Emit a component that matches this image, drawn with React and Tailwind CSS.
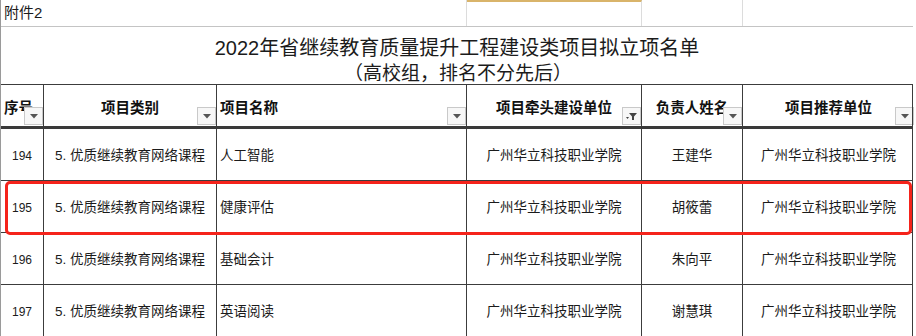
import React from 'react';

const grid = 'grid grid-cols-[43px_173px_250px_175px_101px_171px]';
const font = "font-['Liberation_Sans','Noto_Sans_CJK_SC',sans-serif]";

const rows = [
    { no: '194', type: '5. 优质继续教育网络课程', name: '人工智能', unit: '广州华立科技职业学院', person: '王建华', rec: '广州华立科技职业学院' },
    { no: '195', type: '5. 优质继续教育网络课程', name: '健康评估', unit: '广州华立科技职业学院', person: '胡筱蕾', rec: '广州华立科技职业学院' },
    { no: '196', type: '5. 优质继续教育网络课程', name: '基础会计', unit: '广州华立科技职业学院', person: '朱向平', rec: '广州华立科技职业学院' },
    { no: '197', type: '5. 优质继续教育网络课程', name: '英语阅读', unit: '广州华立科技职业学院', person: '谢慧琪', rec: '广州华立科技职业学院' },
];

function DropButton({ filtered }) {
    return (
        <div className="absolute right-0 bottom-[1px] w-[19px] h-[18px] border border-[#c9c9c9] bg-[#f7f7f7] flex items-center justify-center">
            {filtered ? (
                <svg width="13" height="10" viewBox="0 0 13 10">
                    <path d="M4 2h8L9 5.5V9H7V5.5Z" fill="#444" />
                    <path d="M1 6h3L2.5 8Z" fill="#444" />
                </svg>
            ) : (
                <svg width="8" height="5" viewBox="0 0 8 5">
                    <path d="M0 0h8L4 4.5Z" fill="#555" />
                </svg>
            )}
        </div>
    );
}

function HeadCell({ children, align = 'center', filtered, last }) {
    return (
        <div className={`relative h-full flex items-center pt-[6px] ${last ? '' : 'border-r border-[#3c3c3c]'} ${align === 'left' ? 'justify-start pl-[3px]' : 'justify-center'}`}>
            <span className="text-[14.5px] font-bold text-[#111] whitespace-nowrap">{children}</span>
            <DropButton filtered={filtered} />
        </div>
    );
}

function Cell({ children, align = 'center', small, last }) {
    return (
        <div className={`h-full flex items-center pt-[3px] ${last ? '' : 'border-r border-[#3c3c3c]'} ${align === 'left' ? 'justify-start pl-[3px]' : 'justify-center'}`}>
            <span className={`${small ? 'text-[12px]' : 'text-[13.5px]'} text-[#1b1b1b] whitespace-nowrap`}>{children}</span>
        </div>
    );
}

export default function App() {
    return (
        <div className={`relative w-[916px] h-[336px] bg-white overflow-hidden ${font}`}>
            <div className="w-[913px] border-l border-[#9a9a9a]">
                {/* Top row */}
                <div className={`${grid} h-[27px] border-b border-[#c4c4c4]`}>
                    <div className="col-span-3 flex items-center pl-[3px] border-r border-[#dcdcdc]">
                        <span className="text-[15px] text-[#1b1b1b]">附件2</span>
                    </div>
                    <div className="border-r border-[#dcdcdc] border-t-2 border-t-[#d9b46a]"></div>
                    <div className="border-r border-[#dcdcdc]"></div>
                    <div></div>
                </div>

                {/* Title */}
                <div className="h-[58px] pt-[9px] flex flex-col items-center justify-start border-b border-[#3c3c3c] text-[#1b1b1b] leading-[25px]">
                    <div className="text-[20px]">2022年省继续教育质量提升工程建设类项目拟立项名单</div>
                    <div className="text-[19px] pl-[2px]">（高校组，排名不分先后）</div>
                </div>

                {/* Header */}
                <div className={`${grid} h-[44px] border-b-[3px] border-[#3a3a3a]`}>
                    <HeadCell align="left">序号</HeadCell>
                    <HeadCell>项目类别</HeadCell>
                    <HeadCell align="left">项目名称</HeadCell>
                    <HeadCell filtered>项目牵头建设单位</HeadCell>
                    <HeadCell>负责人姓名</HeadCell>
                    <HeadCell last>项目推荐单位</HeadCell>
                </div>

                {/* Data rows */}
                {rows.map((r) => (
                    <div key={r.no} className={`${grid} h-[52px] border-b border-[#3c3c3c]`}>
                        <Cell small>{r.no}</Cell>
                        <Cell>{r.type}</Cell>
                        <Cell align="left">{r.name}</Cell>
                        <Cell>{r.unit}</Cell>
                        <Cell>{r.person}</Cell>
                        <Cell last>{r.rec}</Cell>
                    </div>
                ))}
            </div>
            <div className="absolute right-[3px] top-[85px] bottom-0 w-px bg-[#3c3c3c]"></div>

            {/* Highlight */}
            <div className="absolute left-[5px] top-[181px] w-[907px] h-[54px] border-[3px] border-[#f5231b] rounded-[5px]"></div>
        </div>
    );
}
